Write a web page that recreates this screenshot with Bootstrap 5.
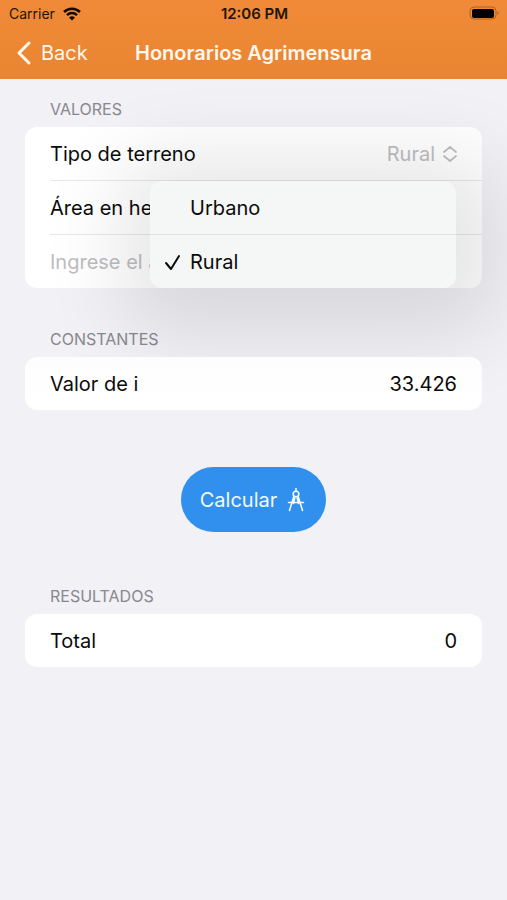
<!DOCTYPE html>
<html lang="es">
<head>
<meta charset="utf-8">
<meta name="viewport" content="width=device-width, initial-scale=1">
<title>Honorarios Agrimensura</title>
<link href="https://cdn.jsdelivr.net/npm/bootstrap@5.3.0/dist/css/bootstrap.min.css" rel="stylesheet">
<style>
  body { background: #f1f1f6; color: #0b0b0b; font-family: Inter, "Liberation Sans", sans-serif; font-size: 20px; line-height: 28px; min-height: 100vh; overflow-x: hidden; }
  .app-header { background: linear-gradient(#f08a38, #e98532); z-index: 2; }
  .status-row { height: 27px; padding: 0 7px 0 9px; font-size: 14px; line-height: 27px; color: #241405; }
  .status-row > *, .nav-row > * { flex: 1 1 0; }
  .status-row > .clock, .nav-row > .screen-title { flex: 0 0 auto; }
  .clock { font-size: 15px; }
  .nav-row { height: 52px; padding: 0 16px; }
  .screen-title, .back-link { color: #fff7ec; }
  .screen-title { font-size: 20px; line-height: 28px; }
  .section-label { font-size: 16px; line-height: 21px; color: #88888d; padding: 0 25px; margin: 0 0 7px; font-weight: 400; }
  .form-area { padding: 20px 25px; }
  .group-card { border-radius: 12px; background: #fff; }
  .group-card.raised { z-index: 1; background: linear-gradient(#fdfdfd, #fff); }
  .line { height: 53px; margin-left: 25px; padding-right: 25px; }
  .line + .line { height: 54px; border-top: 1px solid #e8e8e9; }
  .picker { color: #bebec0; font-size: 20px; line-height: 28px; }
  .value-input { border: 0; background: transparent; padding: 0; outline: 0; color: inherit; min-width: 0; }
  .value-input::placeholder { color: #bdbdbf; opacity: 1; }
  .choice-menu { top: 54px; right: 26px; left: 125px; border: 0; padding: 0; border-radius: 12px; background: #f5f6f6; box-shadow: 8px 12px 80px 36px rgba(0,0,0,.1); overflow: hidden; font-size: 20px; }
  .choice-menu.dropdown-menu { --bs-dropdown-zindex: 1; }
  .choice-menu .dropdown-item { height: 53px; padding: 0 14px; color: #0b0b0b; }
  .choice-menu .dropdown-item + .dropdown-item { height: 54px; border-top: 1px solid #e1e2e2; }
  .tick { width: 26px; }
  .group-gap { margin-top: 41px; }
  .calc-wrap { margin: 57px 0 54px; line-height: 0; }
  .calc-btn { background: #318fee; color: #f2f9ff; height: 65px; padding: 0 19px; font-size: 20px; line-height: 28px; }
  .calc-btn:hover { background: #2784e2; color: #fff; }
</style>
</head>
<body>
<header class="app-header position-relative">
  <div class="status-row d-flex align-items-center">
    <div class="d-flex align-items-center gap-2">
      <span>Carrier</span>
      <svg width="18" height="14" viewBox="0 0 18 14" fill="none" stroke="#120a03" stroke-width="2.500" aria-hidden="true"><path d="M1 5C5.500.500 12.500.500 17 5M4 8.200c2.800-2.800 7.200-2.800 10 0"/><path d="M9 13.500 6 10.500q3-2.500 6 0z" fill="#120a03" stroke="none"/></svg>
    </div>
    <span class="clock fw-semibold">12:06 PM</span>
    <div class="d-flex justify-content-end">
      <svg width="31" height="15" viewBox="0 0 31 15" aria-hidden="true"><rect x="1" y="1" width="26" height="12" rx="4" fill="none" stroke="#a8622a"/><rect x="3" y="3" width="22" height="9" rx="2" fill="#000"/><path d="M28.500 5q2.500 2 0 4z" fill="#a8622a"/></svg>
    </div>
  </div>
  <nav class="nav-row d-flex align-items-center">
    <div class="d-flex"><a href="#" class="back-link d-flex align-items-center gap-2 text-decoration-none">
      <svg width="17" height="26" viewBox="0 0 17 26" fill="none" stroke="currentColor" stroke-width="3" stroke-linecap="round" stroke-linejoin="round" aria-hidden="true"><path d="M13 3 3 13l10 10"/></svg>Back</a></div>
    <h1 class="screen-title fw-semibold m-0">Honorarios Agrimensura</h1>
    <div></div>
  </nav>
</header>
<main class="form-area">
  <section>
    <h2 class="section-label">VALORES</h2>
    <div class="group-card position-relative">
      <div class="line d-flex align-items-center justify-content-between">
        <span id="terrain-label">Tipo de terreno</span>
        <button type="button" class="picker btn border-0 p-0 d-flex align-items-center gap-2" aria-labelledby="terrain-label terrain-value" aria-expanded="true">
          <span id="terrain-value">Rural</span>
          <svg width="14" height="16" viewBox="0 0 14 16" fill="none" stroke="currentColor" stroke-width="1.700" stroke-linecap="round" stroke-linejoin="round" aria-hidden="true"><path d="m1 6 6-5 6 5M1 10l6 5 6-5"/></svg>
        </button>
      </div>
      <div class="line d-flex align-items-center"><label for="area">Área en he</label></div>
      <div class="line d-flex align-items-center"><input id="area" class="value-input w-100" type="text" placeholder="Ingrese el a"></div>
      <div class="choice-menu dropdown-menu show" role="menu">
        <button type="button" role="menuitemradio" aria-checked="false" class="dropdown-item d-flex align-items-center"><span class="tick"></span>Urbano</button>
        <button type="button" role="menuitemradio" aria-checked="true" class="dropdown-item d-flex align-items-center"><span class="tick"><svg class="d-block" width="18" height="18" viewBox="0 0 18 18" fill="none" stroke="currentColor" stroke-width="2" stroke-linecap="round" stroke-linejoin="round" aria-hidden="true"><path d="m2 10 5 6 8-13"/></svg></span>Rural</button>
      </div>
    </div>
  </section>
  <section class="group-gap">
    <h2 class="section-label">CONSTANTES</h2>
    <div class="group-card raised position-relative">
      <div class="line d-flex align-items-center justify-content-between"><span>Valor de i</span><span>33.426</span></div>
    </div>
  </section>
  <div class="calc-wrap text-center">
    <button type="button" class="calc-btn btn border-0 rounded-pill d-inline-flex align-items-center gap-2">Calcular
      <svg width="22" height="26" viewBox="0 0 22 26" fill="none" stroke="currentColor" stroke-width="1.600" stroke-linecap="round" stroke-linejoin="round" aria-hidden="true"><path d="M11 1.500V4M3.500 15.500h15M8.800 9.500 4.500 23.500M13.200 9.500l4.300 14M9.800 11l-1.300 5.500M12.200 11l1.300 5.500"/><circle cx="11" cy="7" r="2.800"/></svg>
    </button>
  </div>
  <section>
    <h2 class="section-label">RESULTADOS</h2>
    <div class="group-card">
      <div class="line d-flex align-items-center justify-content-between"><span>Total</span><output>0</output></div>
    </div>
  </section>
</main>
<script src="https://cdn.jsdelivr.net/npm/bootstrap@5.3.0/dist/js/bootstrap.bundle.min.js"></script>
</body>
</html>
